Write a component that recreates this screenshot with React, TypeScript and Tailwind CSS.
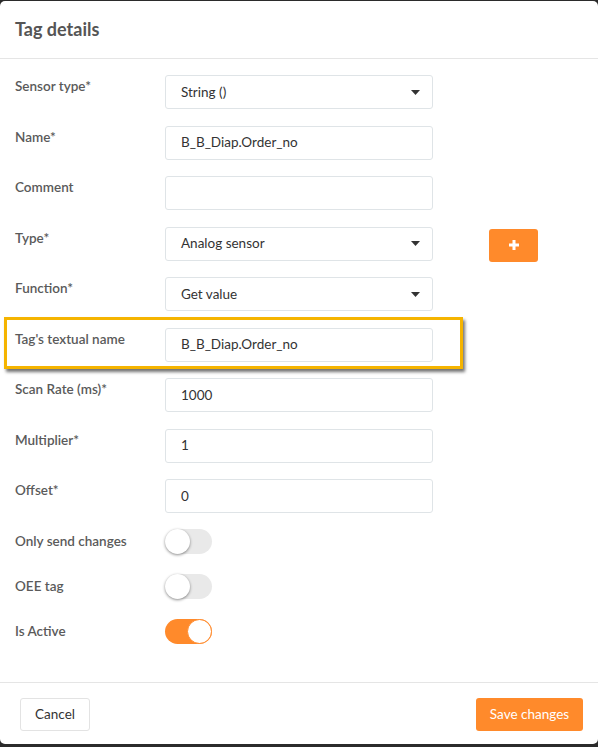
import React from 'react';

const font = { fontFamily: 'Lato, "Open Sans", sans-serif' };

type Field =
  | { label: string; kind: 'select'; value: string; extra?: boolean }
  | { label: string; kind: 'input'; value: string; highlight?: boolean };

const fields: Field[] = [
  { label: 'Sensor type*', kind: 'select', value: 'String ()' },
  { label: 'Name*', kind: 'input', value: 'B_B_Diap.Order_no' },
  { label: 'Comment', kind: 'input', value: '' },
  { label: 'Type*', kind: 'select', value: 'Analog sensor', extra: true },
  { label: 'Function*', kind: 'select', value: 'Get value' },
  { label: "Tag's textual name", kind: 'input', value: 'B_B_Diap.Order_no', highlight: true },
  { label: 'Scan Rate (ms)*', kind: 'input', value: '1000' },
  { label: 'Multiplier*', kind: 'input', value: '1' },
  { label: 'Offset*', kind: 'input', value: '0' },
];

const toggles = [
  { label: 'Only send changes', on: false },
  { label: 'OEE tag', on: false },
  { label: 'Is Active', on: true },
];

function Toggle({ on }: { on: boolean }) {
  return (
    <div
      className={
        'w-[47px] h-[25px] rounded-full flex items-center ' +
        (on ? 'bg-[#ff8a2b] justify-end' : 'bg-[#e9e9e9] justify-start')
      }
    >
      <div
        className={
          'w-[25px] h-[25px] rounded-full bg-white ' +
          (on
            ? 'border border-[#ff8a2b]'
            : 'shadow-[0_1px_3px_rgba(0,0,0,0.45)]')
        }
      />
    </div>
  );
}

export default function App() {
  return (
    <div className="w-[598px] h-[747px] overflow-hidden bg-[#2b2b2b] pt-px" style={font}>
      <div className="h-[743px] bg-white rounded-[5px] flex flex-col">
        {/* header */}
        <div className="h-[58px] px-[15px] flex items-center border-b border-[#e5e5e5]">
          <h2 className="text-[18px] font-bold text-[#555555]">Tag details</h2>
        </div>

        {/* body */}
        <div className="flex-1 px-[15px] pt-[16px] flex flex-col">
          <div className="flex flex-col gap-[16.5px]">
            {fields.map((f) => (
              <div key={f.label} className="relative h-[34px] flex items-start">
                {f.kind === 'input' && f.highlight && (
                  <div className="absolute left-[-11px] top-[-11px] w-[459px] h-[52px] border-[3px] border-[#f5b400] shadow-[2px_3px_3px_rgba(0,0,0,0.55)] pointer-events-none" />
                )}
                <label className="w-[150px] pt-[2px] text-[13.5px] leading-[18px] font-semibold text-[#5a5a5a]">
                  {f.label}
                </label>
                <div className="w-[268px] h-[34px] rounded-[3px] border border-[#dfe4e7] bg-white flex items-center pl-[15px] pr-[12px] text-[13.5px] text-[#333333]">
                  <span className="flex-1">{f.value}</span>
                  {f.kind === 'select' && (
                    <svg width="9" height="5" viewBox="0 0 9 5">
                      <path d="M0 0 H9 L4.5 5 Z" fill="#333333" />
                    </svg>
                  )}
                </div>
                {f.kind === 'select' && f.extra && (
                  <button className="ml-[56px] mt-[2px] w-[49px] h-[33px] rounded-[3px] bg-[#ff8a2b] flex items-center justify-center">
                    <svg width="12" height="12" viewBox="0 0 12 12">
                      <path d="M6 1 V11 M1 6 H11" stroke="#ffffff" strokeWidth="3" />
                    </svg>
                  </button>
                )}
              </div>
            ))}
          </div>

          <div className="mt-[16px] flex flex-col gap-[20px]">
            {toggles.map((t) => (
              <div key={t.label} className="flex items-center">
                <span className="w-[150px] text-[13.5px] font-semibold text-[#5a5a5a]">{t.label}</span>
                <Toggle on={t.on} />
              </div>
            ))}
          </div>
        </div>

        {/* footer */}
        <div className="h-[62px] border-t border-[#e5e5e5] flex items-start justify-between pl-[20px] pr-[15px] pt-[15px]">
          <button className="w-[70px] h-[33px] rounded-[3px] border border-[#e3e3e3] bg-white text-[13.5px] text-[#333333]">
            Cancel
          </button>
          <button className="w-[107px] h-[33px] rounded-[3px] bg-[#ff8a2b] text-[13.5px] text-white">
            Save changes
          </button>
        </div>
      </div>
    </div>
  );
}
